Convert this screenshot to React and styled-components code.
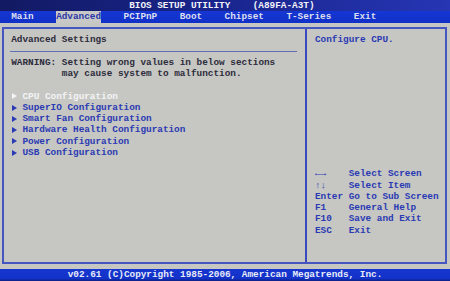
import React from "react";
import styled, { createGlobalStyle } from "styled-components";

const ROW = 11.25;

const Global = createGlobalStyle`
  html, body { margin: 0; padding: 0; background: #c6c6c2; }
  body { width: 450px; height: 281px; overflow: hidden; }
`;

const Screen = styled.div`
  width: 450px;
  height: 281px;
  display: flex;
  flex-direction: column;
  font-family: "Liberation Mono", "DejaVu Sans Mono", monospace;
  font-size: 9.375px;
  font-weight: bold;
  line-height: ${ROW}px;
  white-space: pre;
  overflow: hidden;
`;

const TitleBar = styled.div`
  height: 11px;
  line-height: 11px;
  padding-left: 23ch;
  background: linear-gradient(90deg, #121a62 0%, #18248a 45%, #2636b4 100%);
  color: #f2f2f8;
`;

const MenuBar = styled.div`
  height: 12px;
  display: flex;
  gap: 4ch;
  padding-left: 2ch;
  background: linear-gradient(180deg, #1636d4 0%, #1030c6 100%);
`;

const MenuItem = styled.div`
  height: 12px;
  line-height: 12px;
  color: ${(p) => (p.$active ? "#2838a8" : "#dcdff0")};
  background: ${(p) => (p.$active ? "#c8c8c6" : "transparent")};
`;

const Main = styled.div`
  flex: 1;
  background: #c6c6c2;
  padding: 4px 3px 5px 2px;
  display: flex;
`;

const Frame = styled.div`
  flex: 1;
  border: 2px solid #4656c0;
  display: grid;
  grid-template-columns: 303px 1fr;
`;

const LeftPanel = styled.div`
  border-right: 2px solid #3a4abe;
  padding: 5.4px 0 0 7.25px;
`;

const RightPanel = styled.div`
  padding: 5.4px 0 0 8px;
`;

const Line = styled.div`
  height: ${ROW}px;
  color: ${(p) => p.$color || "#2c2c3c"};
`;

const Rule = styled.div`
  height: 1px;
  margin: 5.1px 8px 5.15px -1.25px;
  background: #6070b8;
`;

const Item = styled.div`
  height: ${ROW}px;
  display: flex;
  align-items: center;
  color: ${(p) => (p.$selected ? "#f4f4f6" : "#2a3ab4")};
`;

const Marker = styled.span`
  width: 2ch;
  display: flex;
  align-items: center;
  &::before {
    content: "";
    width: 0;
    height: 0;
    margin-left: 1px;
    border-left: 5px solid currentColor;
    border-top: 3px solid transparent;
    border-bottom: 3px solid transparent;
  }
`;

const Help = styled.div`
  margin-top: ${ROW * 11 - 1}px;
  display: grid;
  grid-template-columns: 6ch 1fr;
  grid-auto-rows: ${ROW}px;
  color: #2a3ab4;
`;

const BottomBar = styled.div`
  height: 12px;
  line-height: 11px;
  text-align: center;
  color: #e8ebf8;
  background: linear-gradient(180deg, #1636d0 0%, #1232c8 80%, #0c1e80 100%);
`;

const menus = ["Main", "Advanced", "PCIPnP", "Boot", "Chipset", "T-Series", "Exit"];
const items = [
  "CPU Configuration",
  "SuperIO Configuration",
  "Smart Fan Configuration",
  "Hardware Health Configuration",
  "Power Configuration",
  "USB Configuration",
];
const help = [
  ["\u2190\u2192", "Select Screen"],
  ["\u2191\u2193", "Select Item"],
  ["Enter", "Go to Sub Screen"],
  ["F1", "General Help"],
  ["F10", "Save and Exit"],
  ["ESC", "Exit"],
];

export default function App() {
  return (
    <>
      <Global />
      <Screen>
        <TitleBar>{"BIOS SETUP UTILITY    (A89FA-A3T)"}</TitleBar>
        <MenuBar>
          {menus.map((m) => (
            <MenuItem key={m} $active={m === "Advanced"}>
              {m}
            </MenuItem>
          ))}
        </MenuBar>
        <Main>
          <Frame>
            <LeftPanel>
              <Line>Advanced Settings</Line>
              <Rule />
              <Line>WARNING: Setting wrong values in below sections</Line>
              <Line>{"         may cause system to malfunction."}</Line>
              <Line> </Line>
              {items.map((it, i) => (
                <Item key={it} $selected={i === 0}>
                  <Marker />
                  {it}
                </Item>
              ))}
            </LeftPanel>
            <RightPanel>
              <Line $color="#2a3ab4">Configure CPU.</Line>
              <Help>
                {help.map(([k, d]) => (
                  <React.Fragment key={k}>
                    <span>{k}</span>
                    <span>{d}</span>
                  </React.Fragment>
                ))}
              </Help>
            </RightPanel>
          </Frame>
        </Main>
        <BottomBar>v02.61 (C)Copyright 1985-2006, American Megatrends, Inc.</BottomBar>
      </Screen>
    </>
  );
}
